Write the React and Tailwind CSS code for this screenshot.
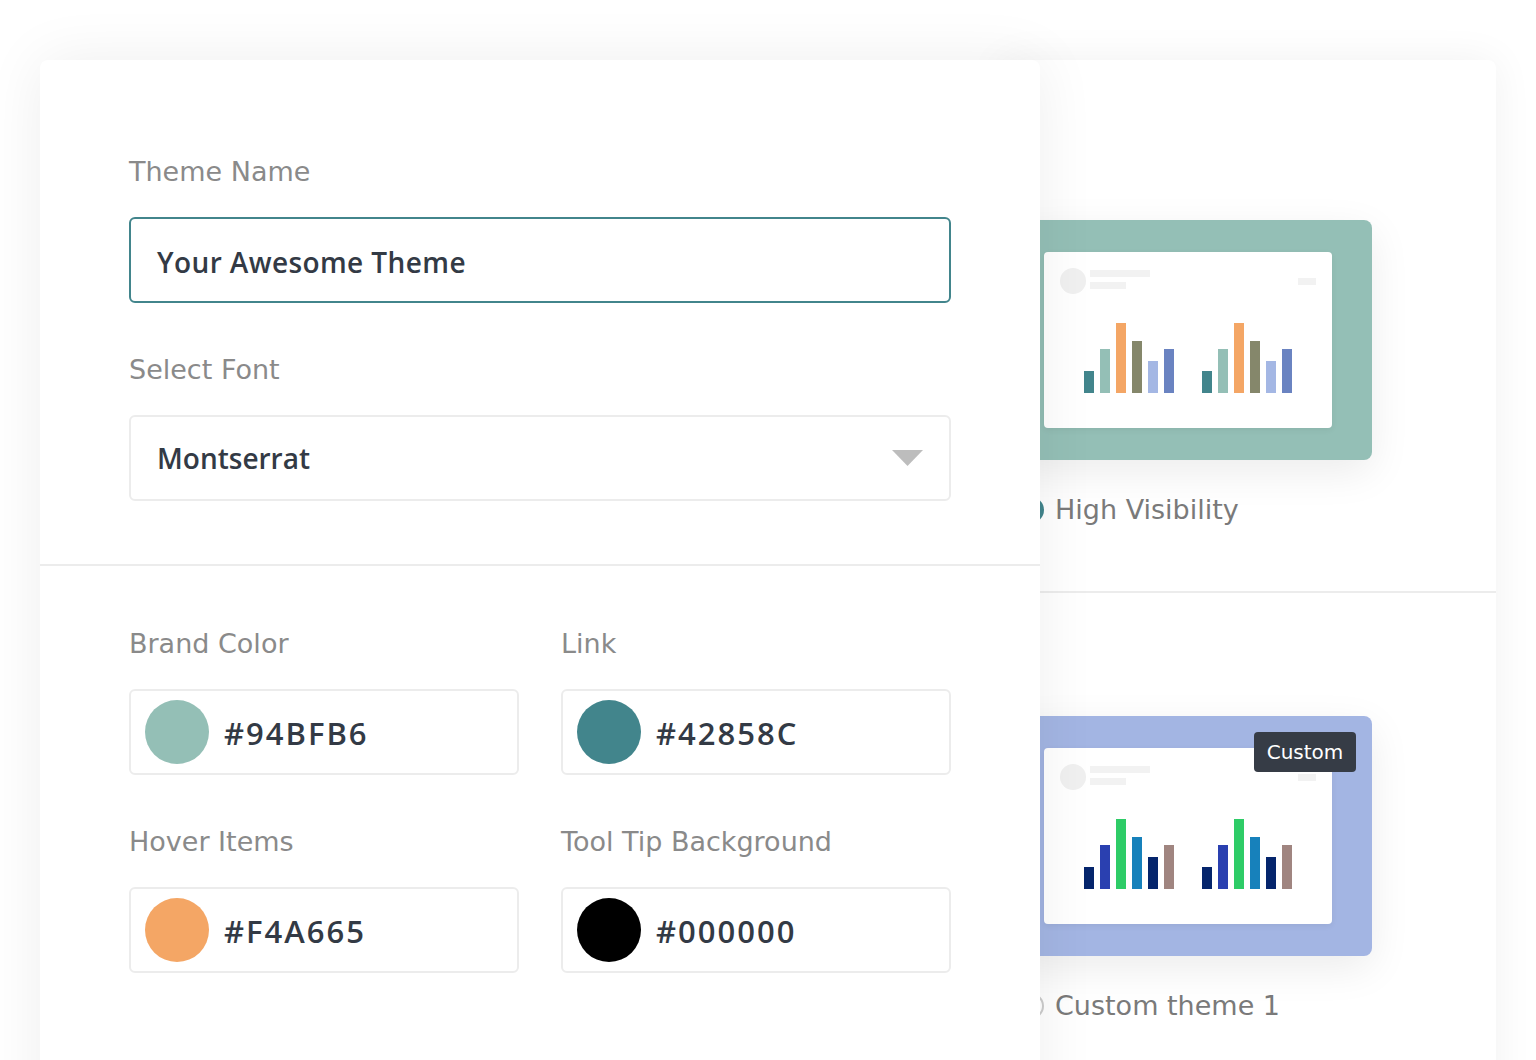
const font = { fontFamily: '"DejaVu Sans", "Liberation Sans", sans-serif' };
const strong = { fontFamily: '"Open Sans", "Noto Sans", sans-serif' };

const tealBars = ["#42858C", "#94BFB6", "#F4A665", "#85876B", "#A4B7E4", "#6A83C1"];
const customBars = ["#05256C", "#2A40B0", "#2ECC67", "#1781BB", "#05256C", "#A08580"];
const heights = ["h-[22px]", "h-[44px]", "h-[70px]", "h-[52px]", "h-[32px]", "h-[44px]"];

function BarGroup({ colors }) {
  return (
    <div className="flex items-end gap-[6px]">
      {colors.map((c, i) => (
        <div key={i} className={`w-[10px] ${heights[i]}`} style={{ background: c }} />
      ))}
    </div>
  );
}

function Preview({ bg, colors, badge }) {
  return (
    <div
      className="relative w-[360px] h-[240px] rounded-lg p-8 shadow-[0_12px_40px_rgba(0,0,0,0.08)]"
      style={{ background: bg }}
    >
      <div className="w-[288px] h-[176px] bg-white rounded-[4px] shadow-[0_2px_6px_rgba(0,0,0,0.06)] px-4 pt-4">
        <div className="flex items-start justify-between">
          <div className="flex gap-1">
            <div className="w-[26px] h-[26px] rounded-full bg-[#f0f0f0]" />
            <div className="flex flex-col gap-[5px] pt-[2px]">
              <div className="w-[60px] h-[7px] bg-[#f2f2f2]" />
              <div className="w-[36px] h-[7px] bg-[#f2f2f2]" />
            </div>
          </div>
          <div className="w-[18px] h-[7px] bg-[#f2f2f2] mt-[10px]" />
        </div>
        <div className="flex items-end gap-[28px] pl-[24px] mt-[23px] h-[76px]">
          <BarGroup colors={colors} />
          <BarGroup colors={colors} />
        </div>
      </div>
      {badge && (
        <div className="absolute top-[16px] right-[16px] w-[102px] h-[40px] rounded-[4px] bg-[#363c46] text-white text-[20px] flex items-center justify-center">
          {badge}
        </div>
      )}
    </div>
  );
}

function Label({ children }) {
  return <div className="text-[27px] leading-[32px] text-[#8a8a8a]">{children}</div>;
}

function ColorField({ label, color, value }) {
  return (
    <div>
      <Label>{label}</Label>
      <div className="mt-[29px] h-[86px] border-2 border-[#ececec] rounded-md flex items-center pl-[14px] gap-[15px]">
        <div className="w-[64px] h-[64px] rounded-full" style={{ background: color }} />
        <span className="text-[31px] tracking-[2px] font-semibold text-[#333a45] pt-[2px]" style={strong}>{value}</span>
      </div>
    </div>
  );
}

export default function App() {
  return (
    <div className="w-[1536px] h-[1060px] overflow-hidden bg-white flex items-start pl-10 pt-[60px]" style={font}>
      <div className="relative z-10 w-[1000px] h-[1100px] shrink-0 bg-white rounded-lg shadow-[0_0_60px_rgba(0,0,0,0.07)]">
        <div className="pl-[89px] pr-[89px] pt-[96px] pb-[63px]">
          <Label>Theme Name</Label>
          <div className="mt-[29px] h-[86px] border-2 border-[#42858C] rounded-md flex items-center pl-[26px]">
            <span className="text-[28px] tracking-[0.4px] font-semibold text-[#333a45] pt-[3px]" style={strong}>Your Awesome Theme</span>
          </div>
          <div className="mt-[51px]">
            <Label>Select Font</Label>
          </div>
          <div className="mt-[29px] h-[86px] border-2 border-[#ececec] rounded-md flex items-center justify-between pl-[26px] pr-[26px]">
            <span className="text-[28px] font-semibold text-[#333a45]" style={strong}>Montserrat</span>
            <svg width="31" height="16" viewBox="0 0 31 16">
              <polygon points="0,0 31,0 15.5,16" fill="#bdbdbd" />
            </svg>
          </div>
        </div>
        <div className="h-[2px] bg-[#ececec]" />
        <div className="pl-[89px] pr-[89px] pt-[62px] grid grid-cols-2 gap-x-[42px] gap-y-[51px]">
          <ColorField label="Brand Color" color="#94BFB6" value="#94BFB6" />
          <ColorField label="Link" color="#42858C" value="#42858C" />
          <ColorField label="Hover Items" color="#F4A665" value="#F4A665" />
          <ColorField label="Tool Tip Background" color="#000000" value="#000000" />
        </div>
      </div>

      <div className="-ml-10 w-[496px] h-[1100px] shrink-0 bg-white rounded-lg shadow-[0_0_40px_rgba(0,0,0,0.06)]">
        <div className="pl-3 pt-[160px] pb-[65px]">
          <Preview bg="#94BFB6" colors={tealBars} />
          <div className="mt-[34px] flex items-center gap-[11px] pl-[6px] h-[32px]">
            <div className="w-[26px] h-[26px] rounded-full bg-[#42858C]" />
            <span className="text-[27px] text-[#7a7a7a]">High Visibility</span>
          </div>
        </div>
        <div className="h-[2px] bg-[#ececec]" />
        <div className="pl-3 pt-[123px]">
          <Preview bg="#A3B5E3" colors={customBars} badge="Custom" />
          <div className="mt-[34px] flex items-center gap-[11px] pl-[6px] h-[32px]">
            <div className="w-[26px] h-[26px] rounded-full border-2 border-[#cccccc]" />
            <span className="text-[27px] text-[#7a7a7a]">Custom theme 1</span>
          </div>
        </div>
      </div>
    </div>
  );
}
